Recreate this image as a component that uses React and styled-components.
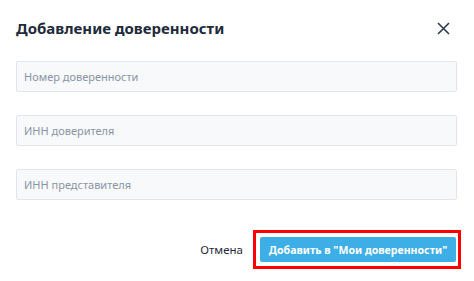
import React from "react";
import styled, { createGlobalStyle } from "styled-components";

const Global = createGlobalStyle`
  html, body { margin: 0; padding: 0; background: #ffffff; }
  body { font-family: "Noto Sans", "Open Sans", sans-serif; }
  * { box-sizing: border-box; }
`;

const Dialog = styled.div`
  width: 474px;
  height: 281px;
  background: #fff;
  padding: 16px 17px 0 16px;
  display: flex;
  flex-direction: column;
`;

const Header = styled.div`
  display: flex;
  align-items: center;
  justify-content: space-between;
  height: 24px;
`;

const Title = styled.h2`
  margin: 0;
  font-size: 15px;
  font-weight: 700;
  color: #1e2b3b;
  letter-spacing: 0;
`;

const Close = styled.button`
  border: none;
  background: none;
  padding: 0;
  width: 16px;
  height: 16px;
  display: flex;
  align-items: center;
  justify-content: center;
  margin-right: 6px;
  cursor: pointer;
`;

const Fields = styled.div`
  display: flex;
  flex-direction: column;
  gap: 23px;
  margin-top: 21px;
`;

const Input = styled.input`
  width: 100%;
  height: 31px;
  border: 1px solid #e2e6ec;
  border-radius: 2px;
  background: #f7f9fb;
  padding: 0 7px;
  font-family: inherit;
  font-size: 11px;
  color: #1e2b3b;
  outline: none;
  &::placeholder { color: #8b95a3; }
`;

const Footer = styled.div`
  display: flex;
  justify-content: flex-end;
  align-items: center;
  gap: 10px;
  margin-top: 30px;
`;

const TextButton = styled.button`
  border: none;
  background: none;
  font-family: inherit;
  font-size: 11.5px;
  color: #1e2b3b;
  padding: 0;
`;

const Highlight = styled.div`
  border: 3px solid #ff0000;
  padding: 4px 2px 4px 4px;
  margin-right: -4px;
`;

const Primary = styled.button`
  display: block;
  border: none;
  border-radius: 2px;
  background: #3eaee6;
  color: #fff;
  font-family: inherit;
  font-weight: 700;
  font-size: 10.6px;
  height: 25px;
  width: 196px;
  padding: 0;
`;

export default function App() {
  return (
    <>
      <Global />
      <Dialog>
        <Header>
          <Title>Добавление доверенности</Title>
          <Close aria-label="Закрыть">
            <svg width="13" height="13" viewBox="0 0 13 13">
              <path d="M1 1L12 12M12 1L1 12" stroke="#2b3a4d" strokeWidth="1.6" fill="none" />
            </svg>
          </Close>
        </Header>
        <Fields>
          <Input placeholder="Номер доверенности" />
          <Input placeholder="ИНН доверителя" />
          <Input placeholder="ИНН представителя" />
        </Fields>
        <Footer>
          <TextButton>Отмена</TextButton>
          <Highlight>
            <Primary>Добавить в "Мои доверенности"</Primary>
          </Highlight>
        </Footer>
      </Dialog>
    </>
  );
}
